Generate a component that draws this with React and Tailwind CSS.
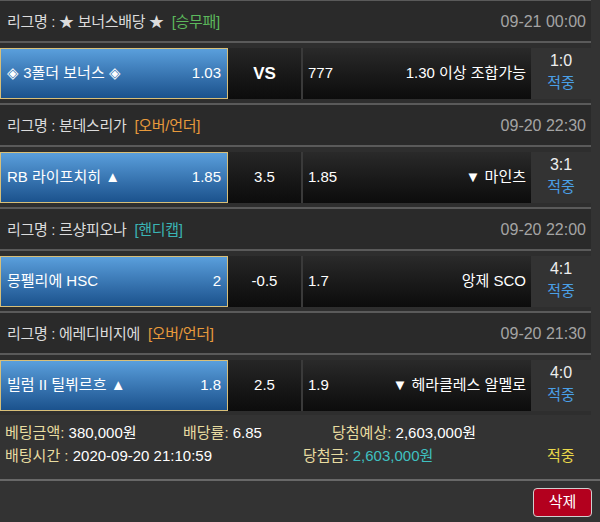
import React from "react";

const groups = [
  {
    league: "★ 보너스배당 ★",
    tag: "[승무패]",
    tagColor: "text-[#5cb85c]",
    date: "09-21 00:00",
    home: "◈ 3폴더 보너스 ◈",
    odds: "1.03",
    mid: "VS",
    midBold: true,
    awayOdds: "777",
    away: "1.30 이상 조합가능",
    score: "1:0",
  },
  {
    league: "분데스리가",
    tag: "[오버/언더]",
    tagColor: "text-[#e89a3c]",
    date: "09-20 22:30",
    home: "RB 라이프치히 ▲",
    odds: "1.85",
    mid: "3.5",
    awayOdds: "1.85",
    away: "▼ 마인츠",
    score: "3:1",
  },
  {
    league: "르샹피오나",
    tag: "[핸디캡]",
    tagColor: "text-[#3ab4b4]",
    date: "09-20 22:00",
    home: "몽펠리에 HSC",
    odds: "2",
    mid: "-0.5",
    awayOdds: "1.7",
    away: "앙제 SCO",
    score: "4:1",
  },
  {
    league: "에레디비지에",
    tag: "[오버/언더]",
    tagColor: "text-[#e89a3c]",
    date: "09-20 21:30",
    home: "빌럼 II 틸뷔르흐 ▲",
    odds: "1.8",
    mid: "2.5",
    awayOdds: "1.9",
    away: "▼ 헤라클레스 알멜로",
    score: "4:0",
  },
];

export default function App() {
  return (
    <div
      className="w-[600px] h-[522px] bg-[#333333] overflow-hidden text-[15px] text-white"
      style={{ fontFamily: '"Liberation Sans", "Noto Sans CJK KR", sans-serif' }}
    >
      <div className="w-[591px]">
        <div className="h-[1px] bg-[#5a5a5a]" />
        {groups.map((g, i) => (
          <div key={i}>
            <div className="h-[40px] bg-[#2a2a2a] flex items-center justify-between pl-[7px] pr-[5px] pt-[2px]">
              <div className="text-[#dcdcdc] text-[15px] tracking-[-0.3px] whitespace-nowrap">
                리그명 : {g.league} <span className={`ml-[4px] ${g.tagColor}`}>{g.tag}</span>
              </div>
              <div className="text-[#a4a4a4] text-[16px]">{g.date}</div>
            </div>
            <div className="h-[2px] bg-[#5a5a5a]" />
            <div className="h-[60px] flex pt-[5px] pb-[4px] bg-[#2e2e2e]">
              <div className="w-[228px] flex items-center justify-between px-[6px] border border-[#d8bf78] bg-linear-to-b from-[#5a9fdc] to-[#1b528d] whitespace-nowrap">
                <span>{g.home}</span>
                <span>{g.odds}</span>
              </div>
              <div
                className={`w-[73px] flex items-center justify-center bg-linear-to-b from-[#262626] to-[#0c0c0c] ${
                  g.midBold ? "font-bold text-[17px]" : ""
                }`}
              >
                {g.mid}
              </div>
              <div className="w-[2px] bg-[#3a3a3a]" />
              <div className="w-[228px] flex items-center justify-between pl-[5px] pr-[5px] bg-linear-to-b from-[#2a2a2a] to-[#0c0c0c] whitespace-nowrap">
                <span>{g.awayOdds}</span>
                <span>{g.away}</span>
              </div>
              <div className="w-[60px] flex flex-col items-center justify-center leading-[22px] pb-[3px] bg-[#333333]">
                <span className="text-[#eeeeee] text-[16px]">{g.score}</span>
                <span className="text-[#4a9fe6]">적중</span>
              </div>
            </div>
            {i < groups.length - 1 && <div className="h-[2px] bg-[#5a5a5a]" />}
          </div>
        ))}
        <div className="pt-[6px] pb-[12px] pl-[5px] leading-[23px] whitespace-nowrap">
          <div className="flex">
            <span className="w-[178px]">
              <span className="text-[#e8dca0]">베팅금액:</span> 380,000원
            </span>
            <span className="w-[149px]">
              <span className="text-[#e8dca0]">배당률:</span> 6.85
            </span>
            <span>
              <span className="text-[#e8dca0]">당첨예상:</span> 2,603,000원
            </span>
          </div>
          <div className="flex">
            <span className="w-[298px]">
              <span className="text-[#e8dca0]">배팅시간 :</span> 2020-09-20 21:10:59
            </span>
            <span className="w-[244px]">
              <span className="text-[#e8dca0]">당첨금:</span>{" "}
              <span className="text-[#3fc0c0]">2,603,000원</span>
            </span>
            <span className="text-[#e8d84a]">적중</span>
          </div>
        </div>
      </div>
      <div className="w-[600px] h-[2px] bg-[#686868]" />
      <div className="flex justify-end pr-[8px] pt-[7px]">
        <button className="w-[59px] h-[29px] rounded-[4px] border border-[#cfcfcf] bg-[#b3001e] text-white text-[15px] flex items-center justify-center">
          삭제
        </button>
      </div>
    </div>
  );
}
